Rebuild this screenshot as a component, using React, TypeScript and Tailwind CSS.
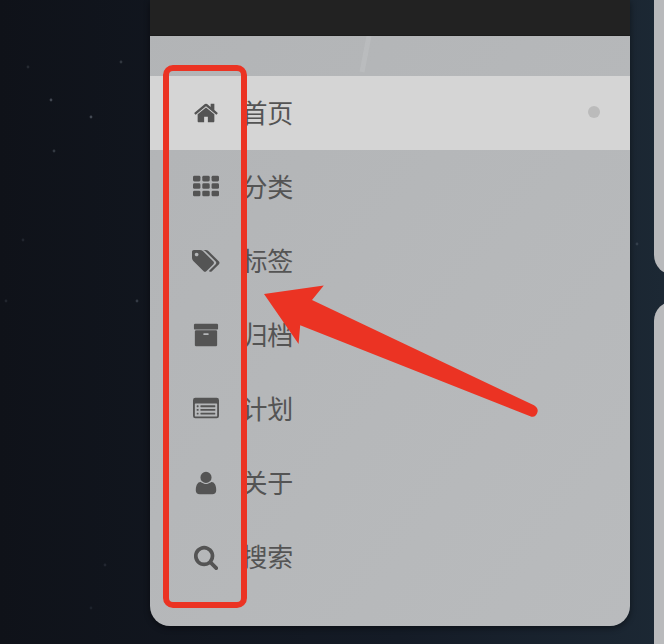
import type { ReactNode } from "react";

type Item = { label: string; icon: ReactNode; active?: boolean };

const Icon = ({ box = "0 0 1792 1792", wide = false, children }: { box?: string; wide?: boolean; children: ReactNode }) => (
  <svg viewBox={box} fill="currentColor" className={wide ? "h-[26px] w-[27.5px] shrink-0" : "size-[26px] shrink-0"}>
    {children}
  </svg>
);

const gridCells = [128, 640, 1152].flatMap((y) => [0, 640, 1280].map((x) => ({ x, y })));

const items: Item[] = [
  {
    label: "首页",
    active: true,
    icon: (
      <Icon>
        <path d="M1472 992v480q0 26-19 45t-45 19h-384v-384h-256v384h-384q-26 0-45-19t-19-45v-480q0-1 .5-3t.5-3l575-474 575 474q1 2 1 6zm223-69l-62 74q-8 9-21 11h-3q-13 0-21-7l-692-577-692 577q-12 8-24 7-13-2-21-11l-62-74q-8-10-7-23.5t11-21.5l719-599q32-26 76-26t76 26l244 204v-195q0-14 9-23t23-9h192q14 0 23 9t9 23v408l219 182q10 8 11 21.5t-7 23.5z" />
      </Icon>
    ),
  },
  {
    label: "分类",
    icon: (
      <Icon>
        {gridCells.map(({ x, y }) => (
          <rect key={`${x}-${y}`} x={x} y={y} width="512" height="384" rx="96" />
        ))}
      </Icon>
    ),
  },
  {
    label: "标签",
    icon: (
      <Icon box="128 0 1899 1792" wide>
        <path d="M576 448q0-53-37.5-90.5t-90.5-37.5-90.5 37.5-37.5 90.5 37.5 90.5 90.5 37.5 90.5-37.5 37.5-90.5zm1067 576q0 53-37 90l-491 492q-39 37-91 37-53 0-90-37l-715-716q-38-37-64.5-101t-26.5-117v-416q0-52 38-90t90-38h416q53 0 117 26.5t102 64.5l715 714q37 39 37 91zm384 0q0 53-37 90l-491 492q-39 37-91 37-36 0-59-14t-53-45l470-470q37-37 37-90 0-52-37-91l-715-714q-38-38-102-64.5t-117-26.5h224q53 0 117 26.5t102 64.5l715 714q37 39 37 91z" />
      </Icon>
    ),
  },
  {
    label: "归档",
    icon: (
      <Icon>
        <path d="M1088 832q0-26-19-45t-45-19h-256q-26 0-45 19t-19 45 19 45 45 19h256q26 0 45-19t19-45zm576-192v960q0 26-19 45t-45 19h-1408q-26 0-45-19t-19-45v-960q0-26 19-45t45-19h1408q26 0 45 19t19 45zm64-448v256q0 26-19 45t-45 19h-1536q-26 0-45-19t-19-45v-256q0-26 19-45t45-19h1536q26 0 45 19t19 45z" />
      </Icon>
    ),
  },
  {
    label: "计划",
    icon: (
      <Icon>
        <path
          fillRule="evenodd"
          d="M160 128h1472a160 160 0 0 1 160 160v1088a160 160 0 0 1-160 160h-1472a160 160 0 0 1-160-160v-1088a160 160 0 0 1 160-160zM160 512a32 32 0 0 0-32 32v832a32 32 0 0 0 32 32h1472a32 32 0 0 0 32-32v-832a32 32 0 0 0-32-32z"
        />
        {[640, 896, 1152].map((y) => (
          <g key={y}>
            <rect x="256" y={y} width="128" height="128" rx="32" />
            <rect x="512" y={y} width="1024" height="128" rx="32" />
          </g>
        ))}
      </Icon>
    ),
  },
  {
    label: "关于",
    icon: (
      <Icon>
        <path
          transform="matrix(1 0 0 -1 192 1536)"
          d="M1408 131q0-120-73-189.5t-194-69.5h-874q-121 0-194 69.5t-73 189.5q0 53 3.5 103.5t14 109t26.5 108.5t43 97.5t62 81t85.5 53.5t111.5 20q9 0 42-21.5t74.5-48t108-48t133.5-21.5t133.5 21.5t108 48t74.5 48t42 21.5q61 0 111.5-20t85.5-53.5t62-81t43-97.5t26.5-108.5t14-109t3.5-103.5zM1088 1024q0-159-112.5-271.5t-271.5-112.5t-271.5 112.5t-112.5 271.5t112.5 271.5t271.5 112.5t271.5-112.5t112.5-271.5z"
        />
      </Icon>
    ),
  },
  {
    label: "搜索",
    icon: (
      <Icon>
        <path d="M1216 832q0-185-131.5-316.5t-316.5-131.5-316.5 131.5-131.5 316.5 131.5 316.5 316.5 131.5 316.5-131.5 131.5-316.5zm512 832q0 52-38 90t-90 38q-54 0-90-38l-343-342q-179 124-399 124-143 0-273.5-55.5t-225-150-150-225-55.5-273.5 55.5-273.5 150-225 225-150 273.5-55.5 273.5 55.5 225 150 150 225 55.5 273.5q0 220-124 399l343 343q37 37 37 90z" />
      </Icon>
    ),
  },
];

const stars = [
  [121, 62, 0.18],
  [28, 67, 0.12],
  [51, 100, 0.28],
  [91, 117, 0.28],
  [54, 151, 0.2],
  [23, 240, 0.1],
  [137, 301, 0.2],
  [6, 301, 0.1],
  [105, 565, 0.1],
  [91, 608, 0.08],
  [637, 244, 0.14],
];

export default function App() {
  return (
    <div className="relative flex h-[644px] w-[664px] overflow-hidden bg-linear-to-r from-[#0f1219] via-[#141b26] via-60% to-[#1c2834] pl-[150px] font-['Noto_Sans_CJK_SC',sans-serif]">
      <svg className="absolute inset-0 size-full" fill="#c5d2e0">
        {stars.map(([x, y, o]) => (
          <circle key={`${x}-${y}`} cx={x} cy={y} r="1.4" opacity={o} />
        ))}
      </svg>

      <aside className="relative flex h-[626px] w-[480px] shrink-0 flex-col overflow-hidden rounded-b-[20px] bg-linear-to-br from-[#b2b4b6] to-[#b9bbbd] shadow-[0_2px_6px_rgba(0,0,0,0.45)]">
        <svg className="absolute top-9 left-[205px] h-10 w-6">
          <path d="M14 0L7 36" stroke="#ffffff" strokeOpacity="0.09" strokeWidth="5" />
        </svg>
        <div className="h-9 shrink-0 border-b border-[#1c1c1c] bg-[#222222]" />
        <nav className="flex flex-col pt-10 text-[#545454]">
          {items.map(({ label, icon, active }) => (
            <a
              key={label}
              className={`flex h-[74px] items-center pr-[30px] pb-px pl-[30px] ${active ? "bg-[#d5d5d5]" : ""}`}
            >
              <span className="flex w-[52px] justify-center">{icon}</span>
              <span className="ml-[9.5px] pb-[2px] text-[26px] leading-[38px] tracking-[-0.3px]">{label}</span>
              {active && <span className="mb-px ml-auto size-3 rounded-full bg-[#bbbbbb]" />}
            </a>
          ))}
        </nav>
      </aside>

      <div className="relative ml-6 flex w-[10px] shrink-0 flex-col gap-[26px] overflow-hidden">
        <div className="h-[275px] w-[200px] shrink-0 rounded-bl-[20px] bg-[#b8b9bb]" />
        <div className="h-[400px] w-[200px] shrink-0 rounded-tl-[20px] bg-[#b9babc]" />
      </div>

      <div className="absolute top-[65px] left-[163px] h-[543px] w-[84px] rounded-[10px] border-6 border-[#eb3323]" />
      <svg className="absolute inset-0 size-full" fill="#eb3323">
        <path d="M264 294L323.8 285.5L312 300L534 405.3Q538.5 408 537.5 412Q536 417.5 531.5 416.7L300.2 325.3L298.6 344Z" />
      </svg>
    </div>
  );
}
